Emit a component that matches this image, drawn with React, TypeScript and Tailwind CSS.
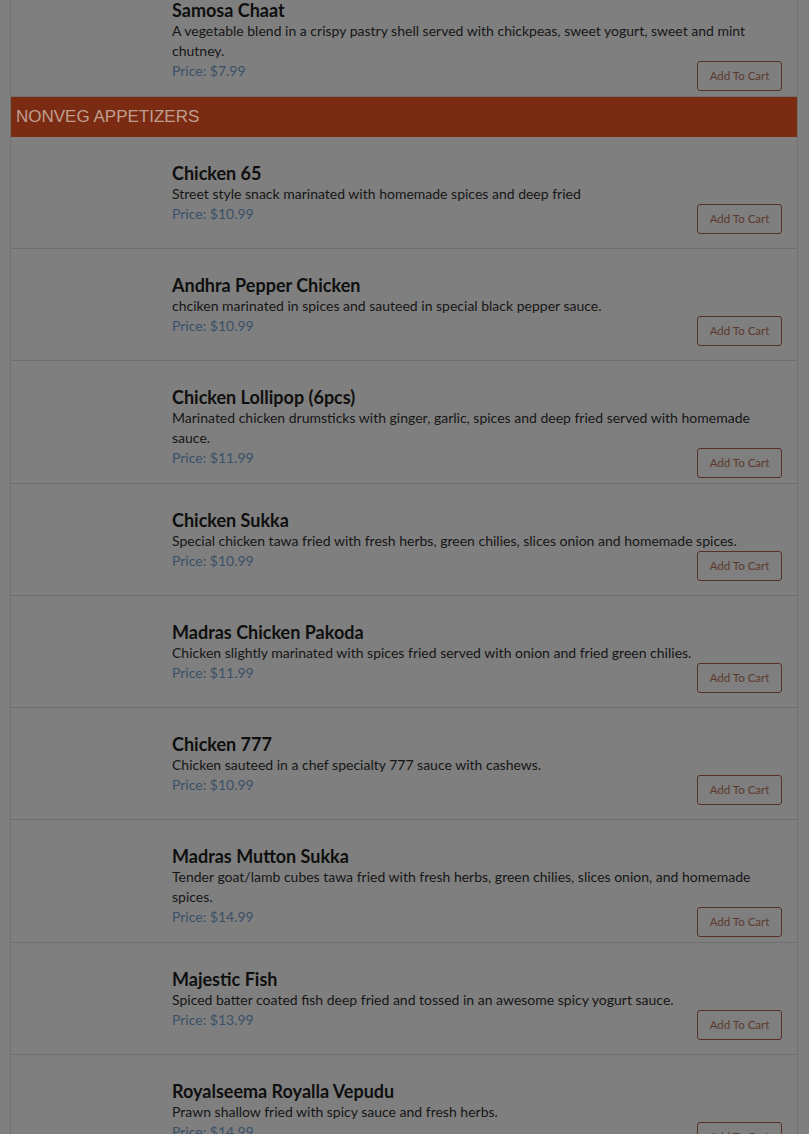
import React from "react";

// Menu list rendered under a dimmed modal backdrop

type Item = { name: string; desc: string; price: string };

const items: Item[] = [
  { name: "Chicken 65", desc: "Street style snack marinated with homemade spices and deep fried", price: "$10.99" },
  { name: "Andhra Pepper Chicken", desc: "chciken marinated in spices and sauteed in special black pepper sauce.", price: "$10.99" },
  { name: "Chicken Lollipop (6pcs)", desc: "Marinated chicken drumsticks with ginger, garlic, spices and deep fried served with homemade sauce.", price: "$11.99" },
  { name: "Chicken Sukka", desc: "Special chicken tawa fried with fresh herbs, green chilies, slices onion and homemade spices.", price: "$10.99" },
  { name: "Madras Chicken Pakoda", desc: "Chicken slightly marinated with spices fried served with onion and fried green chilies.", price: "$11.99" },
  { name: "Chicken 777", desc: "Chicken sauteed in a chef specialty 777 sauce with cashews.", price: "$10.99" },
  { name: "Madras Mutton Sukka", desc: "Tender goat/lamb cubes tawa fried with fresh herbs, green chilies, slices onion, and homemade spices.", price: "$14.99" },
  { name: "Majestic Fish", desc: "Spiced batter coated fish deep fried and tossed in an awesome spicy yogurt sauce.", price: "$13.99" },
  { name: "Royalseema Royalla Vepudu", desc: "Prawn shallow fried with spicy sauce and fresh herbs.", price: "$14.99" },
];

function MenuRow({ item, tall = true }: { item: Item; tall?: boolean }) {
  return (
    <div className="flex py-[5px] border-b border-[#6f6f6f]">
      {/* empty image slot */}
      <div className={`w-[161px] shrink-0 ${tall ? "h-[101px]" : ""}`} />
      <div className="flex-1 pt-[20px] pr-[15px]">
        <h3 className="text-[18px] leading-[22px] font-bold text-[#0f0f0f]">{item.name}</h3>
        <p className="text-[14px] leading-[20px] text-[#161616]">{item.desc}</p>
        <div className="flex items-start justify-between">
          <span className="text-[14px] leading-[20px] text-[#3a5068]">Price: {item.price}</span>
          <button className="h-[30px] w-[85px] rounded-[3px] border border-[#573026] text-[11.5px] text-[#5c392e]">
            Add To Cart
          </button>
        </div>
      </div>
    </div>
  );
}

export default function App() {
  return (
    <div className="bg-[#7f7f7f] overflow-hidden h-[1134px]" style={{ fontFamily: "Lato, 'Noto Sans', sans-serif" }}>
      <div className="ml-[10px] w-[788px] border-l border-r border-[#707070] mt-[-26px]">
        {/* last vegetarian appetizer, cut by the viewport */}
        <MenuRow
          tall={false}
          item={{
            name: "Samosa Chaat",
            desc: "A vegetable blend in a crispy pastry shell served with chickpeas, sweet yogurt, sweet and mint chutney.",
            price: "$7.99",
          }}
        />
        <div className="h-[40px] bg-[#7c2b13] flex items-center px-[5px]">
          <span className="text-[17px] text-[#bf9f8f]" style={{ fontFamily: "'Liberation Sans', Arial, sans-serif" }}>
            NONVEG APPETIZERS
          </span>
        </div>
        {items.map((it) => (
          <MenuRow key={it.name} item={it} />
        ))}
      </div>
    </div>
  );
}
